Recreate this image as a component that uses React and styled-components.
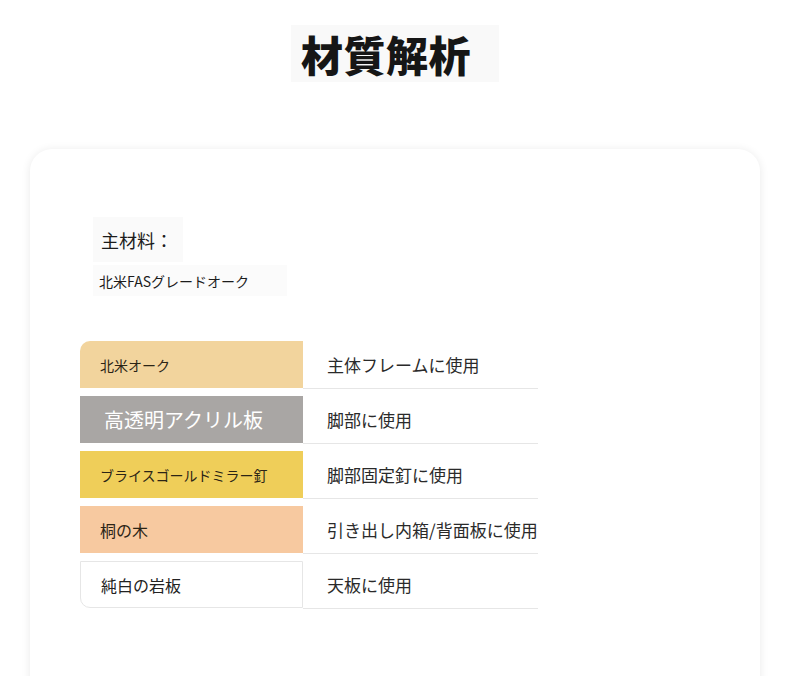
import React from "react";
import styled, { createGlobalStyle } from "styled-components";

const materials = [
  { name: "北米オーク", use: "主体フレームに使用", bg: "#f2d49d", color: "#2b2416", size: 14 },
  { name: "高透明アクリル板", use: "脚部に使用", bg: "#a9a6a4", color: "#ffffff", size: 20, indent: 4 },
  { name: "ブライスゴールドミラー釘", use: "脚部固定釘に使用", bg: "#efce59", color: "#2b2416", size: 14 },
  { name: "桐の木", use: "引き出し内箱/背面板に使用", bg: "#f7c9a0", color: "#2b2416", size: 16 },
  { name: "純白の岩板", use: "天板に使用", bg: "#ffffff", color: "#222", size: 16, outlined: true },
];

const MaterialSection = () => {
  return (
    <Page>
      <GlobalStyle />
      <Header>
        <Title>材質解析</Title>
      </Header>
      <Card>
        <MainInfo>
          <Label>主材料：</Label>
          <Value>北米FASグレードオーク</Value>
        </MainInfo>
        <Table>
          {materials.map((m, i) => (
            <Row key={m.name}>
              <NameCell
                $bg={m.bg}
                $color={m.color}
                $size={m.size}
                $indent={m.indent}
                $outlined={m.outlined}
                $first={i === 0}
                $last={i === materials.length - 1}
              >
                {m.name}
              </NameCell>
              <UseCell>{m.use}</UseCell>
            </Row>
          ))}
        </Table>
      </Card>
    </Page>
  );
};

export default MaterialSection;

const GlobalStyle = createGlobalStyle`
  html, body {
    margin: 0;
    padding: 0;
    background: #fff;
  }
  body {
    font-family: "Noto Sans CJK JP", "Noto Sans", sans-serif;
    color: #222;
    overflow: hidden;
  }
`;

const Page = styled.div`
  width: 790px;
  height: 676px;
  overflow: hidden;
`;

const Header = styled.header`
  display: flex;
  justify-content: center;
  align-items: flex-start;
  padding-top: 25px;
  height: 149px;
  box-sizing: border-box;
`;

const Title = styled.h1`
  margin: 0;
  padding: 0 28px 0 10px;
  height: 57px;
  display: flex;
  align-items: center;
  background: #f9f9f9;
  font-size: 42px;
  font-weight: 900;
  letter-spacing: 0.5px;
  color: #161616;
`;

const Card = styled.section`
  margin: 0 30px;
  height: 600px;
  background: #fff;
  border-radius: 22px;
  box-shadow: 0 1px 10px rgba(0, 0, 0, 0.09);
  padding: 68px 0 0 50px;
  box-sizing: border-box;
`;

const MainInfo = styled.div`
  display: flex;
  flex-direction: column;
  align-items: flex-start;
  margin-left: 13px;
`;

const Label = styled.div`
  padding: 0 10px 0 8px;
  height: 45px;
  display: flex;
  align-items: center;
  background: #fafafa;
  font-size: 18px;
  font-weight: 400;
  color: #1c1c1c;
`;

const Value = styled.div`
  margin-top: 3px;
  padding: 0 38px 0 6px;
  height: 31px;
  display: flex;
  align-items: center;
  background: #fbfbfb;
  font-size: 14px;
  color: #1c1c1c;
`;

const Table = styled.div`
  margin-top: 38px;
  width: 458px;
  display: flex;
  flex-direction: column;
`;

const Row = styled.div`
  display: grid;
  grid-template-columns: 223px 235px;
  height: 55px;
`;

const NameCell = styled.div`
  margin-top: 7px;
  height: 47px;
  box-sizing: border-box;
  display: flex;
  align-items: center;
  padding-left: ${(p) => 20 + (p.$indent || 0)}px;
  background: ${(p) => p.$bg};
  color: ${(p) => p.$color};
  font-size: ${(p) => p.$size}px;
  border: ${(p) => (p.$outlined ? "1px solid #e6e6e6" : "none")};
  border-top-left-radius: ${(p) => (p.$first ? "10px" : "0")};
  border-bottom-left-radius: ${(p) => (p.$last ? "10px" : "0")};
`;

const UseCell = styled.div`
  display: flex;
  align-items: center;
  padding: 7px 0 0 24px;
  box-sizing: border-box;
  border-bottom: 1px solid #e6e6e6;
  font-size: 17px;
  color: #2a2a2a;
  white-space: nowrap;
`;
